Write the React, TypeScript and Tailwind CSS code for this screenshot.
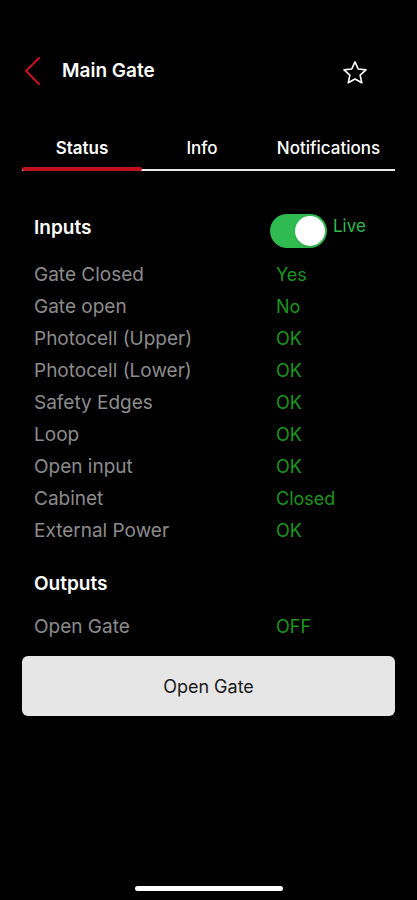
import React from "react";

const rows: [string, string][] = [
  ["Gate Closed", "Yes"],
  ["Gate open", "No"],
  ["Photocell (Upper)", "OK"],
  ["Photocell (Lower)", "OK"],
  ["Safety Edges", "OK"],
  ["Loop", "OK"],
  ["Open input", "OK"],
  ["Cabinet", "Closed"],
  ["External Power", "OK"],
];

function Row({ label, value }: { label: string; value: string }) {
  return (
    <div className="flex h-[32px] items-center">
      <div className="w-[242px] text-[19px] text-[#8c8c8c]">{label}</div>
      <div className="-mt-[2px] text-[18px] text-[#1c961f]">{value}</div>
    </div>
  );
}

export default function App() {
  return (
    <div
      className="flex h-[900px] w-full flex-col bg-black text-white"
      style={{ fontFamily: "Inter, 'Noto Sans', sans-serif" }}
    >
      {/* Header */}
      <div className="mt-[56px] flex h-[30px] items-center pl-[23px] pr-[48px]">
        <svg width="18" height="30" viewBox="0 0 18 30" fill="none">
          <path d="M16 2 L3 15 L16 28" stroke="#c4121f" strokeWidth="2.2" strokeLinecap="round" strokeLinejoin="round" />
        </svg>
        <div className="ml-[21px] text-[19px] font-semibold">Main Gate</div>
        <svg className="ml-auto mt-[4px]" width="28" height="28" viewBox="0 0 24 24" fill="none">
          <path
            d="M12 2.5 L14.8 8.6 L21.4 9.3 L16.4 13.8 L17.8 20.4 L12 17.1 L6.2 20.4 L7.6 13.8 L2.6 9.3 L9.2 8.6 Z"
            stroke="white"
            strokeWidth="1.4"
            strokeLinejoin="round"
          />
        </svg>
      </div>

      {/* Tabs */}
      <div className="mx-[22px] mt-[51px]">
        <div className="flex h-[24px] items-center text-[17px]">
          <div className="w-[120px] text-center font-semibold">Status</div>
          <div className="w-[120px] text-center font-medium">Info</div>
          <div className="flex-1 text-center font-medium">Notifications</div>
        </div>
        <div className="relative mt-[6px] h-[5px]">
          <div className="absolute left-0 right-0 top-[2px] h-[2px] bg-[#e8e8e8]" />
          <div className="absolute left-0 top-0 h-[4px] w-[120px] rounded-sm bg-[#c0101c]" />
        </div>
      </div>

      {/* Inputs */}
      <div className="mt-[42px] px-[34px]">
        <div className="flex h-[34px] items-start">
          <div className="w-[236px] text-[19px] font-semibold leading-[28px]">Inputs</div>
          <div className="flex h-[34px] w-[57px] items-center justify-end rounded-full bg-[#2fbb4f] pr-[2px]">
            <div className="h-[30px] w-[30px] rounded-full bg-white shadow" />
          </div>
          <div className="ml-[6px] text-[17px] leading-[24px] text-[#2fbb4f]">Live</div>
        </div>
        <div className="mt-[11px]">
          {rows.map(([l, v]) => (
            <Row key={l} label={l} value={v} />
          ))}
        </div>
        <div className="mt-[23px] text-[19px] font-semibold leading-[28px]">Outputs</div>
        <div className="mt-[13px]">
          <Row label="Open Gate" value="OFF" />
        </div>
      </div>

      <div className="mt-[13px] px-[22px]">
        <button className="flex h-[60px] w-full items-center justify-center rounded-[6px] bg-[#e6e6e6] text-[18px] text-[#1a1a1a]">
          Open Gate
        </button>
      </div>

      <div className="mb-[9px] mt-auto flex justify-center">
        <div className="h-[5px] w-[148px] rounded-full bg-white" />
      </div>
    </div>
  );
}
